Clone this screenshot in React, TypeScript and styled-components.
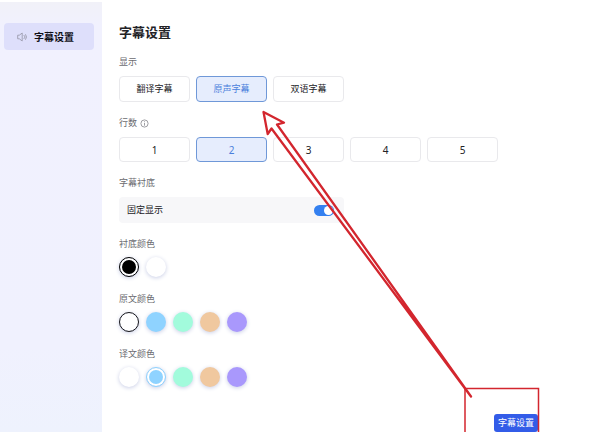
import React, { useState } from "react";
import styled, { createGlobalStyle, css } from "styled-components";

const GlobalStyle = createGlobalStyle`
  *, *::before, *::after { box-sizing: border-box; }
  body {
    margin: 0;
    background: #fff;
    color: #222226;
    font-family: "Noto Sans CJK SC", sans-serif;
    font-size: 9px;
    line-height: 14px;
  }
  button, input { font: inherit; margin: 0; }
`;

const Page = styled.div`
  position: relative;
  display: flex;
  min-height: 100vh;
  padding-top: 2px;
  overflow: hidden;
`;

const Sidebar = styled.nav`
  flex: 0 0 102px;
  padding: 21px 8px 0 4px;
  background: linear-gradient(#f1f1f8, #f1f1fe 24px, #f0f1fe 80%, #eef2fd);
`;

const NavItem = styled.button`
  display: flex;
  align-items: center;
  gap: 6px;
  width: 100%;
  height: 27px;
  padding: 0 13px;
  border: 0;
  border-radius: 4px;
  background: #dedffb;
  color: #101018;
  font-size: 10px;
  font-weight: 700;
`;

const Main = styled.main`
  flex: 1;
  display: flex;
  flex-direction: column;
  gap: 14px;
  padding: 20px 17px 0;
`;

const Title = styled.h1`
  margin: 0;
  font-size: 13px;
  line-height: 19px;
  font-weight: 700;
`;

const Section = styled.section<{ $gap?: number }>`
  display: flex;
  flex-direction: column;
  gap: ${(p) => p.$gap ?? 7}px;
`;

const Label = styled.h2`
  display: flex;
  align-items: center;
  gap: 3px;
  margin: 0;
  font-size: 9px;
  line-height: 14px;
  font-weight: 400;
  color: #6b6b70;
`;

const Options = styled.div`
  display: flex;
  gap: 6px;
`;

const Option = styled.button<{ $numeric?: boolean }>`
  width: 71px;
  height: ${(p) => (p.$numeric ? 25 : 26)}px;
  padding: 0;
  border: 1px solid #e9e9ec;
  border-radius: 4px;
  background: #fff;
  color: #222226;
  ${(p) =>
    p.$numeric &&
    css`
      font-family: "Noto Sans", sans-serif;
      font-size: 10px;
    `}
  ${(p) =>
    p["aria-pressed"] &&
    css`
      border-color: #6f98d8;
      background: #e6edfd;
      color: #4a7fdc;
    `}
`;

const SwitchRow = styled.label`
  display: flex;
  align-items: center;
  justify-content: space-between;
  max-width: 225px;
  height: 26px;
  padding: 0 10px 0 8px;
  border-radius: 4px;
  background: #f7f7f9;
`;

const Switch = styled.input`
  appearance: none;
  display: flex;
  align-items: center;
  width: 20px;
  height: 11px;
  padding: 0 1px;
  border-radius: 6px;
  background: #c8c8d0;
  &::before {
    content: "";
    width: 9px;
    height: 9px;
    border-radius: 50%;
    background: #fff;
  }
  &:checked {
    justify-content: flex-end;
    background: #3480f0;
  }
`;

const ColorSections = styled.div`
  display: flex;
  flex-direction: column;
  gap: 15px;
`;

const Swatches = styled.div`
  display: flex;
  gap: 7px;
`;

const Swatch = styled.input<{ $color: string; $ring: string }>`
  appearance: none;
  width: 20px;
  height: 20px;
  border-radius: 50%;
  background: ${(p) => p.$color};
  box-shadow: 0 1px 4px #c9cee6;
  &:checked {
    border: 1px solid ${(p) => p.$ring};
    padding: 2px;
    background: ${(p) => p.$color} content-box;
  }
`;

const Annotation = styled.svg`
  position: absolute;
  top: 0;
  left: 0;
  pointer-events: none;
`;

const FloatingButton = styled.button`
  position: absolute;
  top: 414px;
  left: 494px;
  width: 44px;
  height: 18px;
  padding: 0;
  border: 0;
  border-radius: 3px;
  background: #335ce8;
  color: #fff;
`;

const SpeakerIcon = () => (
  <svg width="11" height="10" viewBox="0 0 11 10" fill="none" stroke="#9c9cae" strokeWidth="0.9" strokeLinejoin="round" aria-hidden="true">
    <path d="M.7 3.200h1.600L5.200 1v8L2.300 6.800H.7z" />
    <path d="M7 3.400l1.100 1.600L7 6.600M8.700 2.600q1.800 2.400 0 4.800" strokeLinecap="round" />
  </svg>
);

const InfoIcon = () => (
  <svg width="9" height="9" viewBox="0 0 9 9" fill="none" stroke="#85858b" strokeWidth="0.8" aria-hidden="true">
    <circle cx="4.5" cy="4.5" r="3.6" />
    <path d="M4.500 4v2.700M4.500 2.300v.9" />
  </svg>
);

type OptionSectionProps = { title: string; items: string[]; initial: number; numeric?: boolean; info?: boolean };

function OptionSection({ title, items, initial, numeric, info }: OptionSectionProps) {
  const [selected, setSelected] = useState(initial);
  return (
    <Section>
      <Label>
        {title}
        {info && <InfoIcon />}
      </Label>
      <Options role="group" aria-label={title}>
        {items.map((item, i) => (
          <Option key={item} type="button" $numeric={numeric} aria-pressed={i === selected} onClick={() => setSelected(i)}>
            {item}
          </Option>
        ))}
      </Options>
    </Section>
  );
}

type Color = { name: string; value: string; ring?: string };

const textColors: Color[] = [
  { name: "白色", value: "#ffffff", ring: "#18181c" },
  { name: "蓝色", value: "#8fd3ff" },
  { name: "绿色", value: "#a2fbdc" },
  { name: "橙色", value: "#f0c89f" },
  { name: "紫色", value: "#a998fc" },
];

const backgroundColors: Color[] = [
  { name: "黑色", value: "#000000" },
  { name: "白色", value: "#ffffff", ring: "#18181c" },
];

function ColorSection({ title, colors, initial }: { title: string; colors: Color[]; initial: number }) {
  return (
    <Section $gap={6}>
      <Label>{title}</Label>
      <Swatches role="radiogroup" aria-label={title}>
        {colors.map((c, i) => (
          <Swatch
            key={c.name}
            type="radio"
            name={title}
            aria-label={c.name}
            defaultChecked={i === initial}
            $color={c.value}
            $ring={c.ring ?? c.value}
          />
        ))}
      </Swatches>
    </Section>
  );
}

export default function App() {
  return (
    <Page>
      <GlobalStyle />
      <Sidebar>
        <NavItem type="button" aria-current="page">
          <SpeakerIcon />
          字幕设置
        </NavItem>
      </Sidebar>
      <Main>
        <Title>字幕设置</Title>
        <OptionSection title="显示" items={["翻译字幕", "原声字幕", "双语字幕"]} initial={1} />
        <OptionSection title="行数" items={["1", "2", "3", "4", "5"]} initial={1} numeric info />
        <Section>
          <Label>字幕衬底</Label>
          <SwitchRow>
            固定显示
            <Switch type="checkbox" role="switch" defaultChecked />
          </SwitchRow>
        </Section>
        <ColorSections>
          <ColorSection title="衬底颜色" colors={backgroundColors} initial={0} />
          <ColorSection title="原文颜色" colors={textColors} initial={0} />
          <ColorSection title="译文颜色" colors={textColors} initial={1} />
        </ColorSections>
      </Main>
      <FloatingButton type="button">字幕设置</FloatingButton>
      <Annotation width="600" height="432" viewBox="0 0 600 432" fill="none" stroke="#d3262e" aria-hidden="true">
        <path d="M465 433V388.500H538.500V433" strokeWidth="1.500" />
        <path
          d="M471 396.500L277 124.500L284 122.700L263.500 112L267.700 134L271.500 128.500Z"
          strokeWidth="2.300"
          strokeLinejoin="round"
        />
      </Annotation>
    </Page>
  );
}
